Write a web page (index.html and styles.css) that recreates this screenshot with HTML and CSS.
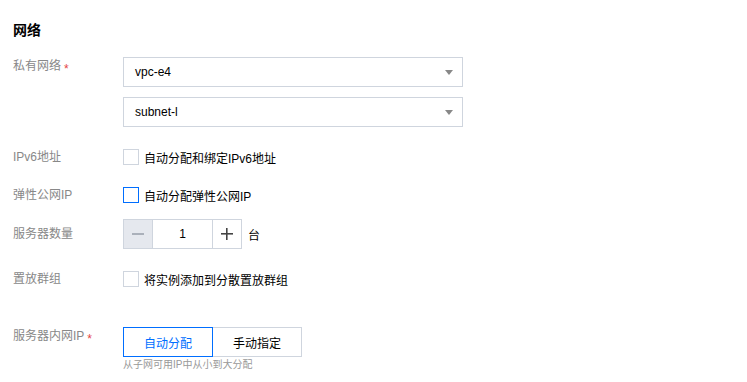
FILE: index.html
```html
<!DOCTYPE html>
<html lang="zh">
<head>
<meta charset="utf-8">
<title>网络</title>
<link rel="stylesheet" href="styles.css">
</head>
<body>
<div class="section">
  <h2 class="title">网络</h2>

  <div class="row row-top">
    <div class="label">私有网络<span class="req">*</span></div>
    <div class="controls stack">
      <div class="select"><span class="val">vpc-e4</span><span class="caret"></span></div>
      <div class="select"><span class="val">subnet-l</span><span class="caret"></span></div>
    </div>
  </div>

  <div class="row row-check gap-a">
    <div class="label">IPv6地址</div>
    <label class="check"><span class="box"></span><span class="ctext">自动分配和绑定IPv6地址</span></label>
  </div>

  <div class="row row-check gap-b">
    <div class="label">弹性公网IP</div>
    <label class="check"><span class="box box-focus"></span><span class="ctext">自动分配弹性公网IP</span></label>
  </div>

  <div class="row row-step gap-c">
    <div class="label">服务器数量</div>
    <div class="stepper">
      <span class="step step-minus"><span class="minus"></span></span>
      <span class="step-val">1</span>
      <span class="step step-plus"><span class="plus"></span></span>
    </div>
    <span class="unit">台</span>
  </div>

  <div class="row row-check gap-a">
    <div class="label">置放群组</div>
    <label class="check"><span class="box"></span><span class="ctext">将实例添加到分散置放群组</span></label>
  </div>

  <div class="row row-top gap-d">
    <div class="label">服务器内网IP<span class="req">*</span></div>
    <div class="controls">
      <div class="seg">
        <span class="seg-btn seg-on">自动分配</span>
        <span class="seg-btn">手动指定</span>
      </div>
      <div class="hint">从子网可用IP中从小到大分配</div>
    </div>
  </div>
</div>
</body>
</html>
```

FILE: styles.css
```css
* { box-sizing: border-box; }
html, body { margin: 0; padding: 0; background: #fff; }
body {
  font-family: "Liberation Sans", "Noto Sans CJK SC", sans-serif;
  font-size: 12px;
  color: #000;
}
.section { padding: 20px 13px 0 13px; }
.title {
  margin: 0 0 17px 0;
  font-size: 14px;
  line-height: 20px;
  font-weight: bold;
  color: #000;
}
.row { display: flex; }
.row-top { align-items: flex-start; }
.row-check { align-items: center; height: 20px; }
.row-step { align-items: center; height: 30px; }
.gap-a { margin-top: 20px; }
.gap-b { margin-top: 18px; }
.gap-c { margin-top: 14px; }
.gap-d { margin-top: 38px; }
.label {
  width: 110px;
  flex: none;
  color: #888;
  line-height: 18px;
}
.row-check .label, .row-step .label { line-height: 20px; }
.req {
  color: #e54545;
  margin-left: 3px;
  font-size: 12px;
  vertical-align: -3px;
}
.controls { display: flex; flex-direction: column; }
.stack { gap: 10px; }
.select {
  width: 340px;
  height: 30px;
  border: 1px solid #cfd5de;
  display: flex;
  align-items: center;
  justify-content: space-between;
  padding: 0 9px 0 11px;
  background: #fff;
}
.val { color: #000; font-size: 12px; }
.caret {
  width: 0;
  height: 0;
  border-left: 4px solid transparent;
  border-right: 4px solid transparent;
  border-top: 5px solid #888;
}
.check { display: flex; align-items: center; gap: 5px; }
.box {
  width: 16px;
  height: 16px;
  border: 1px solid #cfd5de;
  background: #fff;
  display: inline-block;
}
.box-focus { border-color: #006eff; }
.ctext { color: #000; }
.stepper {
  display: flex;
  height: 30px;
  border: 1px solid #cfd5de;
}
.step {
  width: 29px;
  display: flex;
  align-items: center;
  justify-content: center;
}
.step-minus { background: #e5e8ee; border-right: 1px solid #cfd5de; }
.step-plus { border-left: 1px solid #cfd5de; }
.minus { width: 12px; height: 1.5px; background: #aab0ba; }
.plus {
  width: 12px;
  height: 12px;
  background:
    linear-gradient(#444, #444) center / 12px 1.6px no-repeat,
    linear-gradient(#444, #444) center / 1.6px 12px no-repeat;
}
.step-val {
  width: 59px;
  display: flex;
  align-items: center;
  justify-content: center;
  color: #000;
}
.unit { margin-left: 6px; color: #000; }
.seg { display: flex; height: 30px; }
.seg-btn {
  width: 89px;
  display: flex;
  align-items: center;
  justify-content: center;
  border: 1px solid #cfd5de;
  border-left: none;
  color: #000;
  background: #fff;
}
.seg-on {
  width: 90px;
  border: 1px solid #006eff;
  color: #006eff;
}
.hint {
  margin-top: 1px;
  font-size: 10px;
  line-height: 14px;
  color: #999;
}
```
